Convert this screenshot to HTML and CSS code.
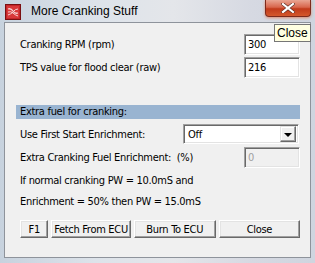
FILE: index.html
```html
<!DOCTYPE html>
<html lang="en">
<head>
  <meta charset="UTF-8">
  <title>More Cranking Stuff</title>
  <link rel="stylesheet" href="styles.css">
</head>
<body>
  <div class="window">
    <div class="titlebar">
      <svg class="app-icon" width="16" height="16" viewBox="0 0 16 16">
        <rect x="0.5" y="0.5" width="15" height="15" fill="#c4262a" stroke="#7a1012"/>
        <rect x="2" y="2" width="12" height="12" fill="#d8383a"/>
        <path d="M3 5 Q6 4 8 7 Q10 10 13 9" stroke="#f6d6d6" stroke-width="1.3" fill="none"/>
        <path d="M3 8 Q6 7 8 9 Q10 11 13 12" stroke="#f6d6d6" stroke-width="1" fill="none"/>
        <path d="M3 11 Q6 10 8 8 Q10 5 13 5" stroke="#f6d6d6" stroke-width="1" fill="none"/>
      </svg>
      <span class="title">More Cranking Stuff</span>
      <div class="close-btn">
        <svg width="14" height="10" viewBox="0 0 14 10">
          <path d="M2 1 L12 9 M12 1 L2 9" stroke="#5a2a20" stroke-width="3.4" stroke-linecap="square"/>
          <path d="M2 1 L12 9 M12 1 L2 9" stroke="#fff" stroke-width="2.2" stroke-linecap="square"/>
        </svg>
      </div>
    </div>

    <div class="client">
      <div class="row">
        <span class="label">Cranking RPM (rpm)</span>
        <div class="field">300</div>
      </div>
      <div class="row row-tight">
        <span class="label">TPS value for flood clear (raw)</span>
        <div class="field">216</div>
      </div>

      <div class="section">Extra fuel for cranking:</div>

      <div class="row row-select">
        <span class="label">Use First Start Enrichment:</span>
        <div class="select">
          <span class="select-value">Off</span>
          <span class="select-arrow"></span>
        </div>
      </div>
      <div class="row row-disabled">
        <span class="label">Extra Cranking Fuel Enrichment:&nbsp; (%)</span>
        <div class="field disabled">0</div>
      </div>
      <div class="row row-note">
        <span class="label">If normal cranking PW = 10.0mS and</span>
      </div>
      <div class="row">
        <span class="label">Enrichment = 50% then PW = 15.0mS</span>
      </div>

      <div class="buttons">
        <div class="btn btn-f1">F1</div>
        <div class="btn btn-fetch">Fetch From ECU</div>
        <div class="btn btn-burn">Burn To ECU</div>
        <div class="btn btn-close">Close</div>
      </div>
    </div>

    <div class="tooltip">Close</div>
  </div>
</body>
</html>
```

FILE: styles.css
```css
body {
  margin: 0;
  background: #fff;
  font-family: 'DejaVu Sans Condensed', 'Liberation Sans', sans-serif;
  font-size: 11px;
  letter-spacing: -0.3px;
  color: #000;
}

.window {
  position: relative;
  width: 315px;
  height: 263px;
  display: flex;
  flex-direction: column;
  background: linear-gradient(90deg, #c7d2de 0%, #dde3ea 30%, #e4e6ea 55%, #d6d9e2 80%, #cfd5df 100%);
  overflow: hidden;
}

.titlebar {
  height: 22px;
  display: flex;
  align-items: flex-start;
  flex-shrink: 0;
}

.app-icon {
  margin: 4px 0 0 5px;
}

.title {
  margin: 4px 0 0 10px;
  font-family: 'Liberation Sans', Arial, sans-serif;
  font-size: 12px;
  letter-spacing: 0;
  line-height: 15px;
  color: #000;
  flex: 1;
}

.close-btn {
  width: 44px;
  height: 16px;
  margin-right: 4px;
  display: flex;
  align-items: center;
  justify-content: center;
  border: 1px solid #7d2a1c;
  border-top: none;
  border-radius: 0 0 4px 4px;
  background: linear-gradient(180deg, #e9a592 0%, #d8664c 45%, #c13a1a 55%, #d4582c 100%);
  box-shadow: 0 1px 3px rgba(230, 90, 40, 0.6);
}

.client {
  flex: 1;
  margin: 0 4px 5px 4px;
  background: #f0f0f0;
  border: 1px solid #8e939b;
  padding: 11px 10px 0 11px;
  display: flex;
  flex-direction: column;
}

.row {
  height: 21px;
  display: flex;
  align-items: center;
  justify-content: space-between;
}

.row-tight {
  margin-top: 2px;
}

.label {
  padding-left: 4px;
  white-space: nowrap;
}

.field {
  box-sizing: border-box;
  width: 56px;
  height: 21px;
  padding: 3px 0 0 3px;
  background: #fff;
  border: 1px solid;
  border-color: #a0a0a0 #fff #fff #a0a0a0;
  box-shadow: inset 1px 1px 0 #696969, inset -1px -1px 0 #e3e3e3;
}

.field.disabled {
  background: #f0f0f0;
  color: #a0a0a0;
}

.section {
  margin-top: 27px;
  height: 14px;
  line-height: 14px;
  padding-left: 4px;
  background: #99b4d1;
}

.row-select {
  margin-top: 5px;
  height: 20px;
}

.select {
  box-sizing: border-box;
  width: 116px;
  height: 20px;
  margin-right: 1px;
  display: flex;
  align-items: center;
  background: #fff;
  border: 1px solid;
  border-color: #a0a0a0 #fff #fff #a0a0a0;
  box-shadow: inset 1px 1px 0 #696969, inset -1px -1px 0 #e3e3e3;
  padding: 2px;
}

.select-value {
  flex: 1;
  padding-left: 2px;
}

.select-arrow {
  box-sizing: border-box;
  width: 16px;
  height: 16px;
  background: #f0f0f0;
  border: 1px solid;
  border-color: #e3e3e3 #696969 #696969 #e3e3e3;
  box-shadow: inset -1px -1px 0 #a0a0a0, inset 1px 1px 0 #fff;
  display: flex;
  align-items: center;
  justify-content: center;
}

.select-arrow::after {
  content: '';
  border-left: 4px solid transparent;
  border-right: 4px solid transparent;
  border-top: 4px solid #000;
  margin-top: 1px;
}

.row-disabled {
  margin-top: 3px;
}

.row-note {
  margin-top: 2px;
}

.buttons {
  margin-top: 8px;
  display: flex;
  gap: 3px;
  padding-left: 4px;
}

.btn {
  box-sizing: border-box;
  height: 18px;
  display: flex;
  align-items: center;
  justify-content: center;
  white-space: nowrap;
  background: #f0f0f0;
  border: 1px solid;
  border-color: #fff #696969 #696969 #fff;
  box-shadow: inset -1px -1px 0 #a0a0a0, inset 1px 1px 0 #e3e3e3;
}

.btn-f1 { width: 29px; }
.btn-fetch { width: 81px; }
.btn-burn { width: 84px; }
.btn-close { width: 83px; }

.tooltip {
  position: absolute;
  left: 274px;
  top: 24px;
  height: 16px;
  padding: 0 2px;
  line-height: 16px;
  font-family: 'Liberation Sans', Arial, sans-serif;
  font-size: 12px;
  letter-spacing: 0;
  background: #ffffe1;
  border: 1px solid #767676;
}
```
